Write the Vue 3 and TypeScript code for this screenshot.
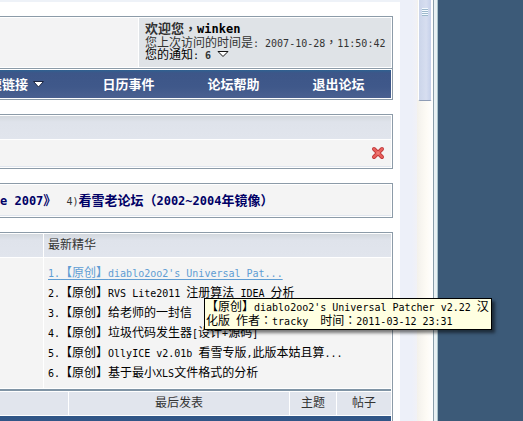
<script setup lang="ts">
import { h } from 'vue'
import type { FunctionalComponent } from 'vue'

interface Run {
  kind: 'latin' | 'han' | 'mark'
  text: string
}

function splitRuns(text: string): Run[] {
  const parts = text.match(/[\x20-\x7e]+|[，：]+|[^\x20-\x7e，：]+/g) ?? []
  return parts.map((part) => {
    if (/^[\x20-\x7e]/.test(part)) return { kind: 'latin', text: part }
    if (/^[，：]/.test(part)) return { kind: 'mark', text: part }
    return { kind: 'han', text: part }
  })
}

// Sets half-width and full-width characters on a common 1:2 grid.
const Mixed: FunctionalComponent<{ text: string }> = (props) =>
  h('span', { class: 'mixed' }, splitRuns(props.text).map((run) => h('span', { class: run.kind }, run.text)))
Mixed.props = ['text']

const navLinks: string[] = ['日历事件', '论坛帮助', '退出论坛']

const digests: string[] = [
  "1.【原创】diablo2oo2's Universal Pat...",
  '2.【原创】RVS Lite2011 注册算法 IDEA 分析',
  '3.【原创】给老师的一封信',
  '4.【原创】垃圾代码发生器[设计+源码]',
  '5.【原创】OllyICE v2.01b 看雪专版,此版本姑且算...',
  '6.【原创】基于最小XLS文件格式的分析',
]

const tipLines: string[] = [
  "【原创】diablo2oo2's Universal Patcher v2.22 汉",
  '化版 作者：tracky  时间：2011-03-12 23:31',
]
</script>

<template>
  <div class="screen">
    <main class="page">
      <section class="panel welcome">
        <div class="greeting-row">
          <div class="banner"></div>
          <div class="greeting">
            <p class="strong"><Mixed text="欢迎您，" /><a class="user" href="#"><Mixed text="winken" /></a></p>
            <p><Mixed text="您上次访问的时间是: 2007-10-28，11:50:42" /></p>
            <p class="notice">
              <a href="#"><Mixed text="您的通知:" /></a>
              <b><Mixed text="6" /></b>
              <svg class="caret" width="12" height="8" viewBox="0 0 12 8" aria-hidden="true">
                <path d="M1 1.5H11L6 6.5Z" fill="#fff" stroke="#111" />
              </svg>
            </p>
          </div>
        </div>
        <nav class="nav">
          <a class="quick" href="#">
            <span>快速链接</span>
            <svg width="11" height="7" viewBox="0 0 11 7" aria-hidden="true">
              <path d="M.5 .5H10.500L5.500 6Z" fill="#fff" stroke="#1b2440" />
            </svg>
          </a>
          <a v-for="link in navLinks" :key="link" href="#">{{ link }}</a>
        </nav>
      </section>

      <section class="panel">
        <div class="bar"></div>
        <div class="dismiss-row">
          <button class="dismiss" type="button" aria-label="关闭">
            <svg width="14" height="14" viewBox="0 0 14 14" aria-hidden="true">
              <path d="M3 3L11 11M11 3L3 11" stroke="#c0393b" stroke-width="4" stroke-linecap="round" />
              <path d="M3 3L11 11M11 3L3 11" stroke="#e8605c" stroke-width="2.400" stroke-linecap="round" />
              <path d="M5 7H9M7 5V9" stroke="#f0837c" stroke-width="1" />
            </svg>
          </button>
        </div>
      </section>

      <section class="panel">
        <div class="links">
          <a class="strong" href="#"><Mixed text="e 2007》" /></a>
          <span><Mixed text="4)" /><a class="strong" href="#"><Mixed text="看雪老论坛（2002~2004年镜像）" /></a></span>
        </div>
      </section>

      <section class="panel">
        <div class="digest">
          <div class="bar"></div>
          <h2 class="bar title">最新精华</h2>
          <div class="blank"></div>
          <ol class="list">
            <li v-for="(item, index) in digests" :key="item">
              <a :class="{ hover: index === 0 }" href="#"><Mixed :text="item" /></a>
              <div v-if="index === 0" class="tip" role="tooltip">
                <div v-for="line in tipLines" :key="line"><Mixed :text="line" /></div>
              </div>
            </li>
          </ol>
        </div>
        <table class="forums">
          <thead>
            <tr>
              <th class="col-icon"></th>
              <th>最后发表</th>
              <th class="col-topics">主题</th>
              <th class="col-posts">帖子</th>
            </tr>
          </thead>
          <tbody>
            <tr>
              <td class="category" colspan="4"></td>
            </tr>
          </tbody>
        </table>
      </section>
    </main>
    <div class="gutter"></div>
    <div class="scrollbar">
      <div class="thumb"><i></i><i></i><i></i><i></i></div>
    </div>
    <div class="frame"></div>
    <div class="desktop"></div>
  </div>
</template>

<style>
body {
  margin: 0;
  overflow: hidden;
}

.mixed {
  white-space: pre;
}

.mixed .latin {
  font-family: "DejaVu Sans Mono", monospace;
  font-size: 10px;
  line-height: 1;
}

.strong .mixed .latin {
  font-size: 12px;
}

.mixed .mark {
  font-family: "Noto Sans CJK TC", sans-serif;
  line-height: 1;
}

.strong .mixed .latin,
.strong .mixed .mark {
  line-height: inherit;
}
</style>

<style scoped>
.screen {
  display: flex;
  height: 100vh;
  overflow: hidden;
  font: 12px/12px "Noto Sans CJK SC", sans-serif;
  color: #333;
}

.page {
  flex: 1;
  min-width: 0;
  box-sizing: border-box;
  display: flex;
  flex-direction: column;
  gap: 14px;
  padding: 14px 7px 0 0;
  border-top: 2px solid #eef2f8;
  background: #fff;
}

a {
  color: #000;
  text-decoration: none;
}

p {
  margin: 0;
}

.strong {
  font-size: 13px;
  font-weight: bold;
}

.panel {
  flex: none;
  padding: 1px 1px 1px 0;
  border: 1px solid #8c9ba8;
  border-left: 0;
}

.greeting-row {
  display: grid;
  grid-template-columns: 138px 1fr;
  column-gap: 1px;
  padding-bottom: 1px;
  border-bottom: 1px solid #8c9ba8;
  margin-right: -1px;
  padding-right: 1px;
}

.banner {
  background: #f3f3f4;
}

.greeting {
  padding: 6px 6px 7px;
  background: #dfe3e7;
  white-space: nowrap;
}

.greeting p {
  height: 12px;
}

.greeting .strong {
  line-height: 8px;
}

.notice {
  display: flex;
  align-items: center;
  gap: 6px;
}

.nav {
  display: grid;
  grid-template-columns: 76px 1fr 1fr 1fr;
  align-items: center;
  height: 28px;
  margin-top: 1px;
  overflow: hidden;
  background: linear-gradient(#2f6191, #3d5688 3px, #3f588a 60%, #4a6090);
}

.nav a {
  color: #fff;
  font-size: 13px;
  font-weight: bold;
  text-align: center;
  white-space: nowrap;
}

.nav .quick {
  display: flex;
  box-sizing: border-box;
  justify-content: flex-end;
  align-items: center;
  gap: 5px;
  padding-right: 32px;
}

.quick span,
.quick svg {
  flex: none;
}

.bar {
  height: 23px;
  background: linear-gradient(#d3d8de, #dfe3eb 6px, #e1e5ed);
}

.dismiss-row {
  display: flex;
  justify-content: flex-end;
  align-items: center;
  height: 26px;
  margin-top: 1px;
  padding-right: 6px;
  border-bottom: 1px solid #e1e6ee;
  background: #f4f4f4;
}

.dismiss {
  display: flex;
  padding: 0;
  border: 0;
  background: none;
}

.links {
  display: flex;
  gap: 10px;
  height: 30px;
  align-items: center;
  border-bottom: 1px solid #e1e6ee;
  background: #f4f4f4;
  white-space: nowrap;
}

.links .strong {
  color: #000066;
}

.digest {
  display: grid;
  grid-template-columns: 43px 1fr;
  gap: 1px;
}

.title {
  margin: 0;
  padding-left: 4px;
  font-size: 12px;
  font-weight: normal;
  line-height: 20px;
}

.blank {
  background: #f4f4f4;
}

.list {
  margin: 0;
  padding: 4px 4px 6px;
  list-style: none;
  line-height: 20px;
  background: #f4f4f4;
  white-space: nowrap;
}

.list li {
  position: relative;
  height: 20px;
}

.list .hover {
  color: #5f9dd3;
  text-decoration: underline;
  text-underline-offset: 2px;
}

.tip {
  position: absolute;
  z-index: 1;
  top: 36px;
  left: 156px;
  padding: 0 2px 2px 1px;
  border: 1px solid #000;
  background: #ffffe1;
  box-shadow: 3px 3px 3px rgba(0, 0, 0, 0.5);
  color: #000;
  line-height: 14px;
}

.forums {
  width: 100%;
  margin-top: 1px;
  border-collapse: separate;
  border-spacing: 0;
  border-top: 2px solid #8094a5;
  table-layout: fixed;
}

.forums th {
  box-sizing: border-box;
  height: 25px;
  padding: 0 0 3px;
  border-top: 1px solid #fff;
  border-right: 1px solid #fff;
  border-bottom: 1px solid #fff;
  background: #e1e5ed;
  font-weight: normal;
}

.forums th:last-child {
  border-right: 0;
}

.forums .col-icon {
  width: 69px;
}

.forums .col-topics {
  width: 47px;
}

.forums .col-posts {
  width: 54px;
}

.category {
  height: 28px;
  padding: 0;
  background: linear-gradient(#2f5687, #3d5688);
}

.gutter {
  width: 17px;
  background: linear-gradient(90deg, #edf0f9 70%, #f1f1f6);
}

.scrollbar {
  width: 16px;
  background: linear-gradient(90deg, #f3f1ec, #fdfbf5 60%, #fff);
}

.thumb {
  display: flex;
  flex-direction: column;
  align-items: center;
  gap: 1px;
  box-sizing: border-box;
  height: 101px;
  margin: 0 1px;
  padding-top: 8px;
  border: 1px solid #fff;
  border-top: 0;
  border-bottom-color: #8e9cb5;
  border-radius: 0 0 2px 2px;
  background: linear-gradient(90deg, #cbd5ea, #d7def0 60%, #c5d0ea);
}

.thumb i {
  width: 6px;
  height: 1px;
  background: #f5fbff;
  border-bottom: 1px solid #9db8cc;
  margin-bottom: -1px;
}

.frame {
  width: 3px;
  border-left: 1px solid #8a9fab;
  border-right: 1px solid #a9c3cb;
  background: #e9f1f4;
}

.desktop {
  width: 85px;
  background: #3c5a78;
}
</style>
